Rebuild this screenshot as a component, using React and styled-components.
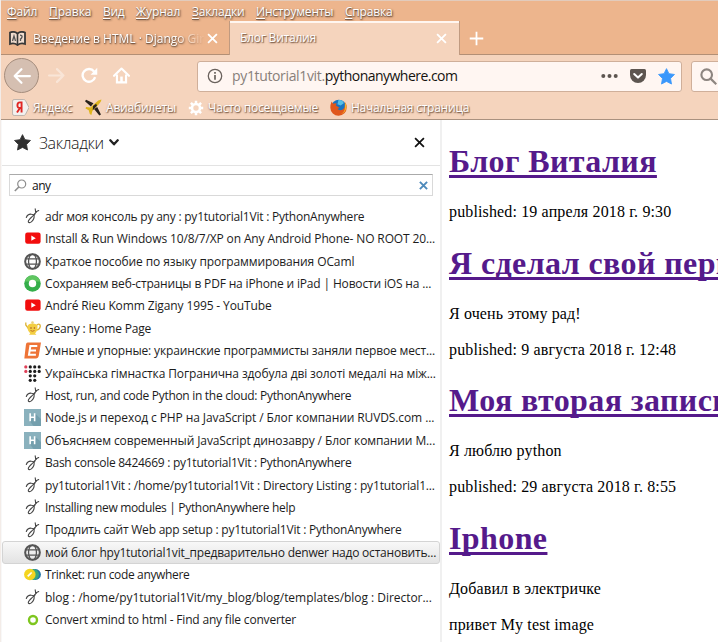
import React from 'react';
import styled, { createGlobalStyle, css } from 'styled-components';

const GlobalStyle = createGlobalStyle`
  * { box-sizing: border-box; }
  html, body { margin: 0; overflow: hidden; background: #fff; }
`;

const ui = css`font-family: "Open Sans", "Noto Sans", sans-serif;`;

const Window = styled.div`
  width: 718px;
  height: 642px;
  overflow: hidden;
  display: flex;
  flex-direction: column;
  border-left: 1px solid #f3ece8;
  ${ui}
`;

const Chrome = styled.header`
  height: 120px;
  flex: none;
  background: #f5d4bd;
  border-bottom: 1px solid #a9917f;
  color: #fff;
`;

const Label = styled.span`
  white-space: pre;
  flex: none;
  font-size: 12px;
  line-height: 16px;
  letter-spacing: ${(p) => p.$track || 0}px;
  text-shadow: ${(p) => (p.$soft ? '1px 1px 1px #80604b, 0 1px 2px #a07a62' : '1px 1px 2px #5e4434, 0 1px 1px #8d6a52')};
`;

const MenuBar = styled.nav`
  height: 21px;
  display: flex;
  padding: 3px 0 0 6px;
  background: #edb58d;
  border-top: 1px solid #e2cbbc;
`;

const MenuItem = styled(Label)`
  width: ${(p) => p.$w}px;
`;

const AccessKey = styled.span`
  text-decoration: underline;
  text-underline-offset: 2px;
`;

const TabStrip = styled.div`
  height: 34px;
  display: flex;
  background: #edb58d;
  border-bottom: 1px solid #b38f75;
`;

const Tab = styled.div`
  height: ${(p) => (p.$active ? 34 : 33)}px;
  width: ${(p) => (p.$active ? 231 : 228)}px;
  display: flex;
  align-items: center;
  padding: ${(p) => (p.$active ? '0 12px 0 10px' : '2px 11px 0 8px')};
  ${(p) => p.$active && css`
    background: #f5d4bd;
    border: solid #c09a80;
    border-width: 0 1px;
    box-shadow: inset 0 2px #fff6f0;
  `}
`;

const TabTitle = styled(Label)`
  flex: 1;
  overflow: hidden;
  margin-left: ${(p) => (p.$icon ? 7 : 0)}px;
  padding: 2px 0;
  ${(p) => p.$icon && css`mask-image: linear-gradient(90deg, #000 80%, transparent 99%);`}
`;

const NewTab = styled.div`
  padding: 8px 0 0 9px;
`;

const NavBar = styled.div`
  height: 42px;
  display: flex;
  align-items: center;
  padding-left: 3px;
`;

const BackButton = styled.div`
  width: 35px;
  height: 35px;
  flex: none;
  margin-top: -1px;
  display: grid;
  place-items: center;
  border: 1px solid #a58d7d;
  border-radius: 50%;
  background: #d5bfb1;
`;

const NavIcon = styled.div`
  margin-left: ${(p) => p.$gap}px;
  height: 18px;
  flex: none;
  display: flex;
  opacity: ${(p) => (p.$off ? 0.4 : 1)};
`;

const UrlBar = styled.div`
  width: 485px;
  height: 31px;
  flex: none;
  margin-left: 67px;
  display: flex;
  align-items: center;
  padding: 0 6px 0 9px;
  background: #fff6f2;
  border: 1px solid #cfaf9a;
  border-radius: 3px;
`;

const Address = styled.div`
  margin-left: 9px;
  display: flex;
`;

const UrlText = styled.span`
  font-size: 14px;
  white-space: pre;
  line-height: 20px;
  letter-spacing: ${(p) => p.$track}px;
  color: ${(p) => (p.$host ? '#15120f' : '#88807a')};
`;

const UrlTools = styled.div`
  margin-left: auto;
  display: flex;
  align-items: center;
  gap: 11px;
`;

const SearchBox = styled.div`
  width: 50px;
  height: 31px;
  flex: none;
  margin-left: 9px;
  padding: 6px 8px;
  background: #fff6f2;
  border: 1px solid #cfaf9a;
  border-radius: 3px;
`;

const BookmarkBar = styled.div`
  height: 22px;
  display: flex;
  align-items: center;
  padding: 0 0 1px 11px;
`;

const BarItem = styled.div`
  width: ${(p) => p.$w}px;
  flex: none;
  display: flex;
  align-items: center;
  gap: ${(p) => p.$gap}px;
`;

const Body = styled.div`
  flex: 1;
  min-height: 0;
  display: flex;
`;

const Sidebar = styled.aside`
  width: 441px;
  flex: none;
  border-right: 2px solid #f0f0f0;
  border-left: 1px solid #f8f8f8;
`;

const SideHeader = styled.div`
  height: 46px;
  display: flex;
  align-items: center;
  padding: 0 15px 0 12px;
  border-bottom: 1px solid #e3e3e3;
`;

const SideTitle = styled.span`
  font-size: 16px;
  font-weight: 300;
  line-height: 22px;
  letter-spacing: -0.35px;
  color: #151515;
  margin: 1px 5px 0 8px;
`;

const CloseSide = styled.div`
  margin-left: auto;
  display: flex;
`;

const Filter = styled.div`
  width: 424px;
  height: 22px;
  margin: 8px 0 0 7px;
  display: flex;
  align-items: center;
  padding: 0 4px 0 4px;
  border: 1px solid #d9d9d9;
  border-top-color: #aaa;
`;

const FilterText = styled.span`
  flex: 1;
  font-size: 12px;
  letter-spacing: -0.5px;
  margin-left: 5px;
  color: #111;
`;

const List = styled.div`
  padding-top: 9px;
`;

const Row = styled.div`
  height: 22.42px;
  display: flex;
  align-items: center;
  padding-left: 21px;
  border: 1px solid transparent;
  border-radius: 3px;
  ${(p) => p.$selected && css`
    background: linear-gradient(#f8f8f8, #e3e3e3);
    border-color: #d4d4d4;
  `}
`;

const RowIcon = styled.span`
  width: 17px;
  height: 17px;
  flex: none;
  display: grid;
  place-items: center;
`;

const RowText = styled.span`
  margin-left: 4px;
  white-space: pre;
  font-size: 12px;
  line-height: 17px;
  letter-spacing: ${(p) => p.$track}px;
  color: #1c1c1c;
`;

const Page = styled.main`
  flex: 1;
  min-width: 0;
  overflow: hidden;
  padding: 23px 0 0 7px;
  font-family: "Liberation Serif", serif;
`;

const PostTitle = styled.h1`
  margin: 0 0 24px;
  font-size: 32px;
  line-height: 36px;
  letter-spacing: 0.4px;
  white-space: nowrap;
  color: #551a8b;
  text-decoration: underline 3px;
  text-underline-offset: 3px;
  text-decoration-skip-ink: none;
`;

const PostText = styled.p`
  margin: 0 0 18px;
  font-size: 16px;
  line-height: 18px;
  letter-spacing: 0.14px;
  color: #000;
  white-space: nowrap;
`;

const Post = styled.article`
  margin-bottom: 23.5px;
  & > p:last-child { margin-bottom: 0; }
`;

const Svg = ({ s = 16, w, h, box, children, ...rest }) => (
  <svg width={w || s} height={h || s} viewBox={box || '0 0 16 16'} fill="none" {...rest}>{children}</svg>
);

const Cross = ({ s, color, width = 2 }) => (
  <Svg s={s} box="0 0 12 12" stroke={color} strokeWidth={width}><path d="M1.2 1.2l9.6 9.6M10.8 1.2l-9.6 9.6" /></Svg>
);

const Snake = () => (
  <Svg stroke="#454545" strokeWidth="1.1" strokeLinecap="round">
    <path d="M1.300 9.500C2.200 7 4.500 6 6.500 6.200 9.500 6.300 9.500 8.500 8.800 10.500 8 13 5.500 15 4 14.600 2.300 14 4 11.500 6.200 9.500L11.500 3.800" />
    <path d="M10.200.8l.5 3.200 3-1.500M9 7.500l1-1.500" />
  </Svg>
);
const YouTube = () => (
  <Svg><rect x=".2" y="1.600" width="15.400" height="11.200" rx="2.200" fill="#f20d0d" /><path d="M6.300 4.600l4.500 2.600-4.500 2.600z" fill="#fff" /></Svg>
);
const Globe = () => (
  <Svg s={17} stroke="#555" strokeWidth="1.200">
    <circle cx="8" cy="8" r="6.900" strokeWidth="1.900" />
    <ellipse cx="8" cy="8" rx="3.700" ry="7" /><path d="M1.500 5.500h13M1.500 10.500h13" />
  </Svg>
);
const GreenDisc = () => (
  <Svg s={17}><circle cx="8" cy="8" r="7.800" fill="#35ae4a" /><path d="M.6 6A7.800 7.800 0 0 1 15.400 6z" fill="#5fc660" /><circle cx="8" cy="8" r="3.500" fill="#fff" /></Svg>
);
const Lamp = () => (
  <Svg>
    <path d="M11.500 5.500c2-2.500 4.300-1 3.600 1.500-.5 1.800-2 3-3.800 3.200M3.500 8.500L.8 5V2.500" stroke="#dcb234" strokeWidth="1.300" />
    <path d="M2.500 6.500Q3 3.500 7.500 3.500t5 3c.2 3.500-1 5.700-2.500 6.700l1.500 1.500H4l1.300-1.500C3.500 12 2.300 9.500 2.500 6.500z" fill="#f3ce42" />
    <circle cx="7.500" cy="2.600" r="1.300" fill="#ead077" /><circle cx="6" cy="8" r=".8" fill="#a4502a" /><circle cx="9.400" cy="8" r=".8" fill="#a4502a" /><path d="M5.500 10.500q2 1.500 4 0" stroke="#bb6a25" />
  </Svg>
);
const OrangeE = () => (
  <Svg s={17}><path d="M3.500.5H16L13.800 13.500Q13.400 15.500 11.500 15.500H.3L1.800 2.500Q2 .5 3.500.5z" fill="#ee7437" /><path d="M12.500 3.800H6L4.700 12h6.500M5.300 7.900h6" stroke="#fff" strokeWidth="1.900" /></Svg>
);
const Dots = () => {
  const pts = [];
  [[0, 1, 2, 3], [0, 1, 2, 3], [1, 2], [1, 2]].forEach((row, y) => row.forEach((x) => pts.push([x, y])));
  return <Svg s={17}>{pts.map(([x, y]) => <circle key={`${x}${y}`} cx={1.700 + x * 4.200} cy={1.800 + y * 4.200} r="1.500" fill={x === 0 ? '#df4159' : '#1d1d1d'} />)}</Svg>;
};
const HTile = () => (
  <Svg s={17}><rect width="16" height="16" fill="#8ab1bd" /><path d="M10.500 4.500l5.500 5v6.500H9L5.500 11.500z" fill="#749fad" /><path d="M5.800 4v7.500M10 4v7.500M5.800 7.700H10" stroke="#fff" strokeWidth="1.500" /></Svg>
);
const Trinket = () => (
  <Svg s={17}>
    <circle cx="10.800" cy="8" r="5.100" fill="#2576a8" /><circle cx="9" cy="8" r="5.100" fill="#39a77c" /><circle cx="5.500" cy="8" r="5.400" fill="#f4d51f" />
    <path d="M3.500 9.800l3.700-3.700" stroke="#fff" strokeWidth="1.600" />
  </Svg>
);
const GreenRing = () => <Svg><circle cx="8" cy="8" r="4" stroke="#7ec61f" strokeWidth="2.400" /></Svg>;

const BookIcon = () => (
  <Svg w={17} h={15} box="0 0 17 15">
    <path d="M1 1.500Q5-.2 8.500 2.500 12-.2 16 1.500V13Q12 11.500 8.500 14 5 11.500 1 13z" fill="#f1ddcf" stroke="#383838" strokeWidth="1.800" />
    <path d="M8.500 2.500V13" stroke="#383838" strokeWidth="1.600" />
    <path d="M3.500 10l1.500-5 1.500 5M11 4.200q2.500 0 2 1.800t-1.500 2V10" stroke="#555" strokeWidth="1.300" />
  </Svg>
);
const Yandex = () => (
  <Svg w={17} h={17}>
    <path d="M2 .5h9q1 0 1.700 1L16 8l-3.300 6.500q-.7 1-1.700 1H2Q.5 15.500.5 14V2Q.5.500 2 .5z" fill="#f3f1ef" stroke="#aaa39e" strokeWidth=".7" />
    <path d="M9 12.800V3.200H7.400q-2.300 0-2.300 2.700t2.300 2.600H9M7.500 8.500L4.700 12.800" stroke="#e12724" strokeWidth="1.800" />
  </Svg>
);
const Plane = () => (
  <Svg s={17}>
    <path d="M15.500.5Q12.500.5 9.500 4L5 8 1 7.500.5 9l3 1.500L4.500 14l1.500 1 1-4 4-4Q15 3.500 15.500.5z" fill="#dfb51c" />
    <path d="M8 4L1 .8 0 2l5.500 5zM11.500 7.500l3.500 7-1.500 1-5-6z" fill="#28221b" /><path d="M7.500 6.500l3-2 .8 1.800-4 4.200z" fill="#28221b" />
  </Svg>
);
const Gear = () => (
  <Svg s={16} stroke="#fff">
    <circle cx="8" cy="8" r="4" strokeWidth="2.600" />
    <path d="M8 .8v2.500M8 12.700v2.500M.8 8h2.500M12.700 8h2.500M2.900 2.900l1.800 1.800M11.300 11.300l1.800 1.800M13.100 2.900l-1.800 1.800M4.700 11.300l-1.800 1.800" strokeWidth="2.500" />
  </Svg>
);
const Firefox = () => (
  <Svg s={17}>
    <circle cx="8.300" cy="7.500" r="6.900" fill="#1774c2" /><path d="M8 1q4-.5 5 3l-3 2-3-1z" fill="#56bfe6" />
    <path d="M1.500 2.300Q.3 5 .3 8.300A7.700 7.700 0 0 0 15.700 8Q15.800 5 14 2.800q.8 5-2 7-3 1.700-5-.3l2-1.300L5.500 6l.8-1.700Q4 3.700 3 4.500z" fill="#e0571c" />
    <path d="M14 2.800q3 5 0 9-2 2-4 2.400 4-2 4-6z" fill="#f7b32b" />
  </Svg>
);
const starPath = 'M8 .6l2.300 4.700 5.200.8-3.700 3.700.9 5.300L8 12.600l-4.700 2.500.9-5.300L.5 6.100l5.200-.8z';
const Star = ({ color, s }) => <Svg s={s}><path d={starPath} fill={color} stroke={color} strokeWidth=".8" strokeLinejoin="round" /></Svg>;
const ArrowLeft = () => <Svg s={18} stroke="#fff" strokeWidth="2" strokeLinecap="round" strokeLinejoin="round"><path d="M15 8H1.500M7.500 2L1.500 8l6 6" /></Svg>;
const ArrowRight = () => <Svg s={17} stroke="#fff" strokeWidth="2" strokeLinecap="round" strokeLinejoin="round"><path d="M1 8h13.500M8.500 2l6 6-6 6" /></Svg>;
const Reload = () => (
  <Svg s={17}><path d="M13.300 9.500A6 6 0 1 1 12.300 4.200" stroke="#fff" strokeWidth="2.200" /><path d="M15.300.8v6.400H9z" fill="#fff" /></Svg>
);
const Home = () => (
  <Svg s={17}><path d="M1 8.300L8 1.500l7 6.800" stroke="#fff" strokeWidth="2" strokeLinecap="round" strokeLinejoin="round" /><path d="M3.700 7v7.500h8.600V7" stroke="#fff" strokeWidth="2" /><path d="M6.800 9h2.400v5.500H6.800z" fill="#fff" /></Svg>
);
const Info = () => (
  <Svg s={16} stroke="#6a625d"><circle cx="8" cy="8" r="6.700" strokeWidth="1.300" /><path d="M8 7v4.800M8 4v1.800" strokeWidth="1.700" /></Svg>
);
const More = () => <Svg w={17} h={6} box="0 0 17 6"><g fill="#5d5550"><circle cx="2.300" cy="3" r="2" /><circle cx="8.500" cy="3" r="2" /><circle cx="14.700" cy="3" r="2" /></g></Svg>;
const Pocket = () => (
  <Svg w={18} h={16} box="0 0 18 16"><path d="M2.500 1h13Q17 1 17 2.500V7a8 8 0 0 1-16 0V2.500Q1 1 2.500 1z" fill="#5d5550" /><path d="M5.200 6l3.800 3.600L12.800 6" stroke="#fff" strokeWidth="2" strokeLinecap="round" strokeLinejoin="round" /></Svg>
);
const Magnifier = () => <Svg s={17} stroke="#8d8580" strokeWidth="2"><circle cx="6.300" cy="6.300" r="5" /><path d="M10 10l5.300 5.300" /></Svg>;
const SmallLens = () => <Svg s={13} box="0 0 13 13" stroke="#8d8d8d" strokeWidth="1.200"><circle cx="7.700" cy="5" r="4" /><path d="M4.800 8L.8 12" strokeWidth="1.600" /></Svg>;

const menus = [
  ['Ф', 'айл', 42, -0.1], ['П', 'равка', 54, 0], ['В', 'ид', 33, -0.3], ['Ж', 'урнал', 56, -0.05],
  ['З', 'акладки', 64, -0.2], ['И', 'нструменты', 89, -0.2], ['С', 'правка', 60, -0.2],
];

const rows = [
  [Snake, 'adr моя консоль py any : py1tutorial1Vit : PythonAnywhere', -0.22],
  [YouTube, 'Install & Run Windows 10/8/7/XP on Any Android Phone- NO ROOT 20...', -0.13],
  [Globe, 'Краткое пособие по языку программирования OCaml', -0.11],
  [GreenDisc, 'Сохраняем веб-страницы в PDF на iPhone и iPad | Новости iOS на ...', -0.16],
  [YouTube, 'André Rieu Komm Zigany 1995 - YouTube', -0.12],
  [Lamp, 'Geany : Home Page', -0.17],
  [OrangeE, 'Умные и упорные: украинские программисты заняли первое мест...', -0.14],
  [Dots, 'Українська гімнастка Погранична здобула дві золоті медалі на між...', -0.12],
  [Snake, 'Host, run, and code Python in the cloud: PythonAnywhere', -0.3],
  [HTile, 'Node.js и переход с PHP на JavaScript / Блог компании RUVDS.com ...', -0.1],
  [HTile, 'Объясняем современный JavaScript динозавру / Блог компании М...', -0.11],
  [Snake, 'Bash console 8424669 : py1tutorial1Vit : PythonAnywhere', -0.27],
  [Snake, 'py1tutorial1Vit : /home/py1tutorial1Vit : Directory Listing : py1tutorial1...', -0.16],
  [Snake, 'Installing new modules | PythonAnywhere help', -0.32],
  [Snake, 'Продлить сайт Web app setup : py1tutorial1Vit : PythonAnywhere', -0.22],
  [Globe, 'мой блог hpy1tutorial1vit_предварительно denwer надо остановить...', -0.21],
  [Trinket, 'Trinket: run code anywhere', -0.35],
  [Snake, 'blog : /home/py1tutorial1Vit/my_blog/blog/templates/blog : Director...', -0.04],
  [GreenRing, 'Convert xmind to html - Find any file converter', -0.19],
];

const posts = [
  ['Блог Виталия', 'published: 19 апреля 2018 г. 9:30'],
  ['Я сделал свой первый сайт', 'Я очень этому рад!', 'published: 9 августа 2018 г. 12:48'],
  ['Моя вторая запись', 'Я люблю python', 'published: 29 августа 2018 г. 8:55'],
  ['Iphone', 'Добавил в электричке', 'привет My test image'],
];

export default function App() {
  return (
    <Window>
      <GlobalStyle />
      <Chrome>
        <MenuBar>
          {menus.map(([key, rest, w, track]) => (
            <MenuItem key={key} $w={w} $track={track}><AccessKey>{key}</AccessKey>{rest}</MenuItem>
          ))}
        </MenuBar>
        <TabStrip>
          <Tab>
            <BookIcon />
            <TabTitle $icon>Введение в HTML · Django Girls</TabTitle>
            <Cross s={11} color="#fff" />
          </Tab>
          <Tab $active>
            <TabTitle $soft $track={-0.22}>Блог Виталия</TabTitle>
            <Cross s={11} color="#fff" />
          </Tab>
          <NewTab><Svg s={15} stroke="#fff" strokeWidth="1.900"><path d="M8 .8v14.400M.8 8h14.400" /></Svg></NewTab>
        </TabStrip>
        <NavBar>
          <BackButton><ArrowLeft /></BackButton>
          <NavIcon $gap={9} $off><ArrowRight /></NavIcon>
          <NavIcon $gap={16}><Reload /></NavIcon>
          <NavIcon $gap={15}><Home /></NavIcon>
          <UrlBar>
            <Info />
            <Address>
              <UrlText $track={-0.35}>py1tutorial1vit.</UrlText>
              <UrlText $host $track={-0.53}>pythonanywhere.com</UrlText>
            </Address>
            <UrlTools><More /><Pocket /><Star s={17} color="#3a97fb" /></UrlTools>
          </UrlBar>
          <SearchBox><Magnifier /></SearchBox>
        </NavBar>
        <BookmarkBar>
          <BarItem $w={73} $gap={4}><Yandex /><Label $soft $track={-0.3}>Яндекс</Label></BarItem>
          <BarItem $w={103} $gap={4}><Plane /><Label $soft $track={-0.2}>Авиабилеты</Label></BarItem>
          <BarItem $w={142} $gap={4}><Gear /><Label $soft $track={-0.17}>Часто посещаемые</Label></BarItem>
          <BarItem $w={150} $gap={4}><Firefox /><Label $soft $track={-0.23}>Начальная страница</Label></BarItem>
        </BookmarkBar>
      </Chrome>
      <Body>
        <Sidebar>
          <SideHeader>
            <Star s={17} color="#303030" />
            <SideTitle>Закладки</SideTitle>
            <Svg w={10} h={7} box="0 0 10 7" stroke="#222" strokeWidth="2.300" strokeLinecap="round" strokeLinejoin="round"><path d="M1.300 1.300L5 5.300l3.700-4" /></Svg>
            <CloseSide><Cross s={11} color="#111" width={1.9} /></CloseSide>
          </SideHeader>
          <Filter>
            <SmallLens />
            <FilterText>any</FilterText>
            <Cross s={9} color="#4e8abb" width={2.6} />
          </Filter>
          <List>
            {rows.map(([Icon, text, track], i) => (
              <Row key={i} $selected={i === 15}>
                <RowIcon><Icon /></RowIcon>
                <RowText $track={track}>{text}</RowText>
              </Row>
            ))}
          </List>
        </Sidebar>
        <Page>
          {posts.map(([title, ...lines]) => (
            <Post key={title}>
              <PostTitle>{title}</PostTitle>
              {lines.map((line) => <PostText key={line}>{line}</PostText>)}
            </Post>
          ))}
        </Page>
      </Body>
    </Window>
  );
}
